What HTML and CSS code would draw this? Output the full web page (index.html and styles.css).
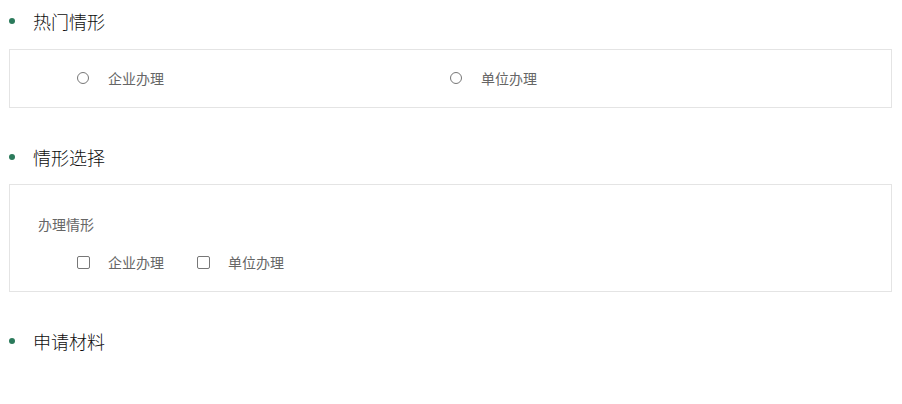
FILE: index.html
```html
<!DOCTYPE html>
<html lang="zh-CN">
<head>
<meta charset="utf-8">
<title>情形</title>
<link rel="stylesheet" href="styles.css">
</head>
<body>
<div class="page">
  <h2 class="sec-title"><span class="dot"></span>热门情形</h2>
  <div class="panel hot">
    <label class="opt"><span class="radio"></span><span class="opt-text">企业办理</span></label>
    <label class="opt"><span class="radio"></span><span class="opt-text">单位办理</span></label>
  </div>

  <h2 class="sec-title gap"><span class="dot"></span>情形选择</h2>
  <div class="panel choose">
    <div class="field-label">办理情形</div>
    <div class="checks">
      <label class="opt"><span class="check"></span><span class="opt-text">企业办理</span></label>
      <label class="opt"><span class="check"></span><span class="opt-text">单位办理</span></label>
    </div>
  </div>

  <h2 class="sec-title gap"><span class="dot"></span>申请材料</h2>
</div>
</body>
</html>
```
FILE: styles.css
```css
html, body {
  margin: 0;
  padding: 0;
  background: #fff;
}
body {
  font-family: "Noto Sans CJK SC", "Noto Sans", sans-serif;
  color: #333;
}
.page {
  padding: 0 10px 0 9px;
}
.sec-title {
  margin: 0;
  height: 42px;
  display: flex;
  align-items: center;
  font-size: 18px;
  font-weight: 300;
  color: #0d0d0d;
  line-height: 1;
}
.sec-title.gap {
  margin-top: 28px;
}
.dot {
  width: 6px;
  height: 6px;
  border-radius: 50%;
  background: #2b7a5b;
  margin-right: 18px;
  flex: none;
}
.panel {
  border: 1px solid #e4e4e4;
  margin-top: 7px;
}
.panel.choose {
  margin-top: 6px;
  padding: 29px 0 19px 28px;
}
.panel.hot {
  display: grid;
  grid-template-columns: 373px auto;
  padding: 18px 0 19px 67px;
}
.opt {
  display: flex;
  align-items: center;
  height: 20px;
  font-size: 14px;
  color: #666;
}
.opt-text {
  line-height: 20px;
}
.radio {
  width: 10px;
  height: 10px;
  border: 1px solid #777;
  border-radius: 50%;
  margin-right: 19px;
  flex: none;
}
.field-label {
  font-size: 14px;
  line-height: 20px;
  color: #666;
}
.checks {
  display: flex;
  gap: 33px;
  margin-top: 18px;
  padding-left: 39px;
}
.check {
  width: 11px;
  height: 11px;
  border: 1px solid #777;
  border-radius: 2px;
  margin-right: 18px;
  flex: none;
}
```
